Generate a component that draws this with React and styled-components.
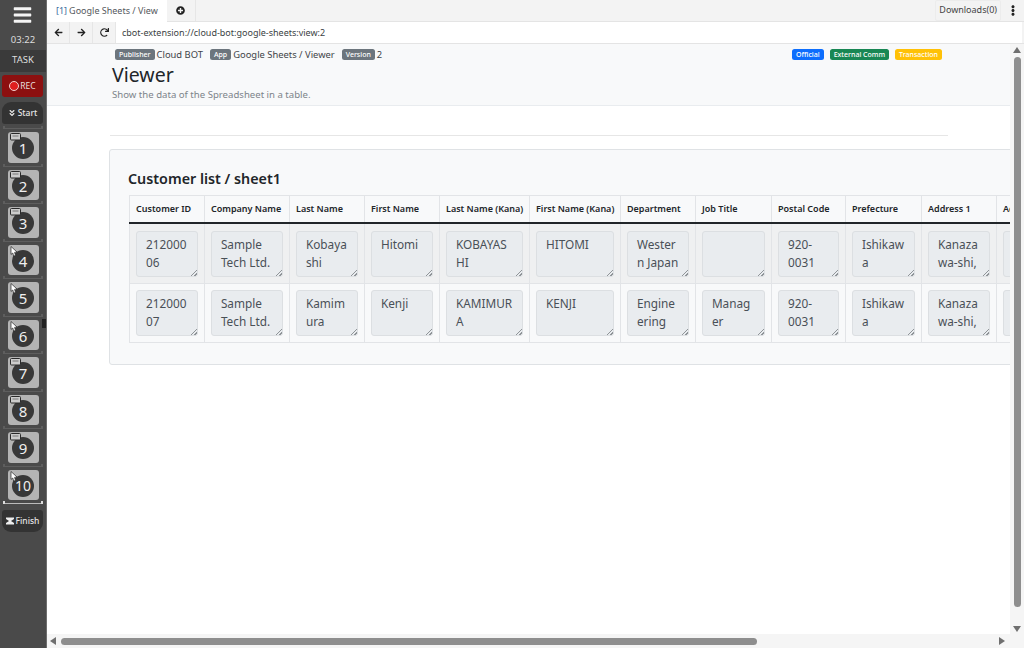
import React from 'react'
import styled, { createGlobalStyle } from 'styled-components'
import { FaArrowLeft, FaArrowRight, FaRedo, FaPlusCircle, FaEllipsisV, FaBars, FaAngleDoubleDown } from 'react-icons/fa'

const Global = createGlobalStyle`
  html, body { margin: 0; padding: 0; height: 100%; overflow: hidden; }
  body { font-family: "Noto Sans", "Liberation Sans", sans-serif; color: #212529; background: #fff; }
`

const Shell = styled.div`
  display: flex;
  width: 1024px;
  height: 648px;
  overflow: hidden;
`

const Sidebar = styled.aside`
  position: relative;
  flex: 0 0 47px;
  display: flex;
  flex-direction: column;
  align-items: center;
  background: #4a4a4a;
  border-right: 1px solid #6e6e6e;
  box-sizing: border-box;
  color: #e9e9e9;
`

const Menu = styled.div`
  height: 30px;
  display: flex;
  align-items: center;
  justify-content: center;
  margin-left: -1px;
  color: #f4f4f4;
  font-size: 20px;
  svg { width: 19px; height: 20px; }
`

const Clock = styled.div`
  height: 20px;
  line-height: 20px;
  font-size: 9.5px;
  color: #dcdcdc;
`

const TaskBand = styled.div`
  width: 100%;
  height: 22px;
  line-height: 20px;
  text-align: center;
  font-size: 9.5px;
  background: #3a3a3a;
  color: #dedede;
`

const RecButton = styled.div`
  width: 41px;
  height: 22px;
  margin-top: 3px;
  margin-left: -1px;
  padding-bottom: 1px;
  box-sizing: border-box;
  display: flex;
  align-items: center;
  justify-content: center;
  gap: 1px;
  border-radius: 3px;
  background: #8c1010;
  font-size: 8.5px;
  color: #e8dede;
`

const RecDot = styled.span`
  width: 8px;
  height: 8px;
  border-radius: 50%;
  background: #e01e1e;
  border: 1px solid #f2d0d0;
`

const EndButton = styled.div`
  width: 41px;
  height: 22px;
  margin-left: -1px;
  margin-top: ${p => p.$top}px;
  padding-bottom: 1px;
  box-sizing: border-box;
  display: flex;
  align-items: center;
  justify-content: center;
  gap: 2px;
  background: #333;
  border-radius: ${p => p.$radius};
  font-size: 8.5px;
  font-weight: 500;
  color: #e6e6e6;
  svg { width: 8px; height: 8px; }
`

const Steps = styled.div`
  display: flex;
  flex-direction: column;
  margin-top: 1px;
  margin-left: -1px;
`

const Connector = styled.div`
  position: relative;
  width: 40px;
  height: 7px;
  &::before {
    content: '';
    position: absolute;
    left: 0;
    right: 0;
    top: 3px;
    border-top: 1px solid ${p => (p.$light ? '#bbb' : '#5e5e5e')};
  }
  &::after {
    content: '';
    position: absolute;
    left: 0;
    right: 0;
    top: 1px;
    height: 3px;
    border-left: 2px solid ${p => (p.$light ? '#ddd' : '#5e5e5e')};
    border-right: 2px solid ${p => (p.$light ? '#ddd' : '#5e5e5e')};
  }
`

const Step = styled.div`
  position: relative;
  width: 31px;
  height: 30.5px;
  margin-left: 5px;
  display: flex;
  align-items: center;
  justify-content: center;
  background: #b4b4b4;
  border-radius: 3px;
`

const StepNumber = styled.div`
  width: 22px;
  height: 22px;
  margin-top: 2px;
  border-radius: 50%;
  background: #383838;
  color: #efefef;
  display: flex;
  align-items: center;
  justify-content: center;
  font-size: ${p => (p.$small ? 14 : 15)}px;
`

const StepBadge = styled.svg`
  position: absolute;
  left: 2px;
  top: 1px;
`

const Handle = styled.div`
  position: absolute;
  left: 42px;
  top: 319px;
  width: 4px;
  height: 9px;
  background: #222;
`

const Main = styled.main`
  flex: 1;
  min-width: 0;
  display: flex;
  flex-direction: column;
`

const TabBar = styled.div`
  height: 22px;
  display: flex;
  background: #f3f3f3;
  border-bottom: 1px solid #e4e4e4;
  box-sizing: border-box;
  font-size: 9px;
  color: #55595e;
`

const Tab = styled.div`
  height: 22px;
  padding: 0 9px 2px;
  box-sizing: border-box;
  display: flex;
  align-items: center;
  background: #fff;
  span { color: #3c6e9e; margin-right: 2px; }
`

const NewTab = styled.div`
  width: 28px;
  display: flex;
  align-items: center;
  justify-content: center;
  border-right: 1px solid #e6e6e6;
  color: #222;
  svg { width: 9px; height: 9px; }
`

const TabTools = styled.div`
  margin-left: auto;
  display: flex;
  align-items: center;
  color: #222;
`

const Downloads = styled.div`
  height: 19px;
  line-height: 17px;
  padding: 0 3px;
  border: 1px solid #ececec;
  border-radius: 2px;
  color: #444;
  font-size: 9px;
`

const Kebab = styled.div`
  width: 23px;
  display: flex;
  justify-content: center;
  svg { width: 10px; height: 11px; }
`

const AddressBar = styled.div`
  height: 22px;
  display: flex;
  background: #f3f3f3;
  border-bottom: 1px solid #e4e4e4;
  box-sizing: border-box;
`

const NavButton = styled.div`
  width: 22px;
  display: flex;
  align-items: center;
  justify-content: center;
  border-right: 1px solid #e6e6e6;
  color: #222;
  svg { width: 9px; height: 9px; }
`

const Url = styled.div`
  flex: 1;
  margin-right: 2px;
  padding-left: 6px;
  line-height: 21px;
  background: #fff;
  font-size: 9px;
  color: #3b3f44;
`

const Viewport = styled.div`
  flex: 1;
  min-height: 0;
  display: grid;
  grid-template-columns: 1fr 14px;
  grid-template-rows: 1fr 14px;
`

const Scroller = styled.div`
  overflow: hidden;
  min-width: 0;
  min-height: 0;
`

const PageHead = styled.header`
  height: 62px;
  box-sizing: border-box;
  padding: 4px 68px 0 65px;
  background: #f8f9fa;
  border-bottom: 1px solid #e9ecef;
`

const MetaRow = styled.div`
  display: flex;
  align-items: center;
  height: 12px;
  font-size: 9.4px;
  color: #3f4448;
  padding-left: 3px;
`

const MetaValue = styled.span`
  margin: 0 7px 0 2px;
`

const Pill = styled.span`
  display: inline-block;
  height: 11px;
  line-height: 11px;
  padding: 0 4px;
  border-radius: 2.5px;
  font-size: 7px;
  font-weight: 500;
  color: ${p => p.$text || '#fff'};
  background: ${p => p.$bg || '#6c757d'};
`

const Flags = styled.div`
  margin-left: auto;
  display: flex;
  gap: 6px;
`

const Title = styled.h1`
  margin: 3px 0 0;
  font-size: 19.5px;
  font-weight: 400;
  line-height: 24px;
  color: #212529;
`

const Lead = styled.p`
  margin: 0;
  padding-top: 1px;
  line-height: 14px;
  font-size: 9.6px;
  color: #7d848a;
`

const Body = styled.div`
  padding: 29px 0 0 63px;
`

const Rule = styled.hr`
  width: 838px;
  margin: 0 0 13px;
  border: 0;
  border-top: 1px solid #e6e6e6;
`

const Card = styled.section`
  width: 1300px;
  height: 216px;
  margin-left: -1px;
  box-sizing: border-box;
  padding: 18px 18px 0 19px;
  background: #f8f9fa;
  border: 1px solid #dfe2e5;
  border-radius: 3px;
`

const CardTitle = styled.h2`
  margin: 0 0 6px -1px;
  height: 21px;
  line-height: 21px;
  font-size: 14.3px;
  font-weight: 600;
  color: #212529;
`

const Table = styled.table`
  border-collapse: collapse;
  table-layout: fixed;
  background: #f8f9fa;
`

const Th = styled.th`
  height: 27px;
  padding: 0 0 1px 6px;
  box-sizing: border-box;
  text-align: left;
  font-size: 9px;
  font-weight: 600;
  color: #212529;
  white-space: nowrap;
  border: 1px solid #e2e4e7;
  border-bottom: 2px solid #212529;
`

const Td = styled.td`
  padding: ${p => (p.$striped ? '7.2px' : '6.2px')} 6px 6.2px;
  border: 1px solid #e2e4e7;
  background: ${p => (p.$striped ? '#eff0f1' : 'transparent')};
`

const Field = styled.textarea`
  display: block;
  width: 100%;
  height: 46px;
  box-sizing: border-box;
  margin: 0;
  padding: 4.4px 9.5px 4.4px 8.9px;
  border: 1px solid #dcdfe2;
  border-radius: 3px;
  outline: 0;
  background: #e9ecef;
  color: #495057;
  font: 400 11.8px/17.7px "Noto Sans", "Liberation Sans", sans-serif;
  overflow: hidden;
  resize: both;
  &::-webkit-resizer {
    background: linear-gradient(135deg, transparent 78%, #8f9498 78%, #8f9498 83%, transparent 83%, transparent 89%, #8f9498 89%, #8f9498 94%, transparent 94%);
  }
`

const VTrack = styled.div`
  background: #f5f5f5;
  display: flex;
  flex-direction: column;
  align-items: center;
`

const HTrack = styled.div`
  background: #f5f5f5;
  display: flex;
  align-items: center;
`

const Thumb = styled.div`
  background: #8e8e8e;
  border-radius: 4px;
  ${p => (p.$vertical ? 'width: 7px; height: 550px; margin-top: 4px;' : 'height: 7px; width: 696px; margin-left: 5px;')}
`

const Arrow = styled.svg`
  flex: none;
  fill: #6f6f6f;
  margin: ${p => p.$margin};
`

const Corner = styled.div`
  background: #f5f5f5;
`

const columns = [
  ['Customer ID', 75],
  ['Company Name', 85],
  ['Last Name', 75],
  ['First Name', 75],
  ['Last Name (Kana)', 90],
  ['First Name (Kana)', 91],
  ['Department', 75],
  ['Job Title', 76],
  ['Postal Code', 74],
  ['Prefecture', 76],
  ['Address 1', 75],
  ['Address 2', 75],
]

const rows = [
  ['21200006', 'Sample Tech Ltd.', 'Kobayashi', 'Hitomi', 'KOBAYASHI', 'HITOMI', 'Western Japan', '', '920-0031', 'Ishikawa', 'Kanazawa-shi,', ''],
  ['21200007', 'Sample Tech Ltd.', 'Kamimura', 'Kenji', 'KAMIMURA', 'KENJI', 'Engineering', 'Manager', '920-0031', 'Ishikawa', 'Kanazawa-shi,', ''],
]

const triggers = ['msg', 'msg', 'msg', 'cursor', 'cursor', 'cursor', 'msg', 'msg', 'msg', 'cursor']

function Trigger({ kind }) {
  if (kind === 'cursor') {
    return (
      <StepBadge width="8" height="11" viewBox="0 0 8 11">
        <path d="M1 0.5 L7 6 L4.6 6.4 L5.6 9.6 L3.6 10 L2.8 7 L1 8.4 Z" fill="#fff" stroke="#222" strokeWidth="0.7" />
      </StepBadge>
    )
  }
  return (
    <StepBadge width="11" height="8" viewBox="0 0 11 8">
      <rect x="0.5" y="0.5" width="10" height="6.5" rx="1" fill="#ccc" stroke="#2a2a2a" />
      <path d="M2.5 3h6" stroke="#777" strokeWidth="1" />
    </StepBadge>
  )
}

function TriangleUp() {
  return <Arrow width="8" height="6" viewBox="0 0 8 6" $margin="3px 0 0"><path d="M4 0 L8 6 H0 Z" /></Arrow>
}

function TriangleDown() {
  return <Arrow width="8" height="6" viewBox="0 0 8 6" $margin="auto 0 2px"><path d="M4 6 L8 0 H0 Z" /></Arrow>
}

export default function App() {
  return (
    <Shell>
      <Global />
      <Sidebar>
        <Menu><FaBars /></Menu>
        <Clock>03:22</Clock>
        <TaskBand>TASK</TaskBand>
        <RecButton><RecDot />REC</RecButton>
        <EndButton $top={5} $radius="9px 9px 3px 3px"><FaAngleDoubleDown />Start</EndButton>
        <Steps>
          <Connector />
          {triggers.map((kind, i) => (
            <React.Fragment key={i}>
              <Step>
                <Trigger kind={kind} />
                <StepNumber $small={i === 9}>{i + 1}</StepNumber>
              </Step>
              <Connector $light={i === 9} />
            </React.Fragment>
          ))}
        </Steps>
        <EndButton $top={3} $radius="3px 3px 9px 9px">
          <svg viewBox="0 0 8 8"><path d="M0 0.5h8v1.5L5 4l3 2v1.5H0V6l3-2-3-2z" fill="#eee" /></svg>
          Finish
        </EndButton>
        <Handle />
      </Sidebar>
      <Main>
        <TabBar>
          <Tab><span>[1]</span> Google Sheets / View</Tab>
          <NewTab><FaPlusCircle /></NewTab>
          <TabTools>
            <Downloads>Downloads(0)</Downloads>
            <Kebab><FaEllipsisV /></Kebab>
          </TabTools>
        </TabBar>
        <AddressBar>
          <NavButton><FaArrowLeft /></NavButton>
          <NavButton><FaArrowRight /></NavButton>
          <NavButton><FaRedo /></NavButton>
          <Url>cbot-extension://cloud-bot:google-sheets:view:2</Url>
        </AddressBar>
        <Viewport>
          <Scroller>
            <PageHead>
              <MetaRow>
                <Pill>Publisher</Pill><MetaValue>Cloud BOT</MetaValue>
                <Pill>App</Pill><MetaValue>Google Sheets / Viewer</MetaValue>
                <Pill>Version</Pill><MetaValue>2</MetaValue>
                <Flags>
                  <Pill $bg="#0d6efd">Official</Pill>
                  <Pill $bg="#198754">External Comm</Pill>
                  <Pill $bg="#ffc107">Transaction</Pill>
                </Flags>
              </MetaRow>
              <Title>Viewer</Title>
              <Lead>Show the data of the Spreadsheet in a table.</Lead>
            </PageHead>
            <Body>
              <Rule />
              <Card>
                <CardTitle>Customer list / sheet1</CardTitle>
                <Table style={{ width: columns.reduce((sum, c) => sum + c[1], 0) }}>
                  <colgroup>
                    {columns.map(([name, width]) => <col key={name} style={{ width }} />)}
                  </colgroup>
                  <thead>
                    <tr>{columns.map(([name]) => <Th key={name}>{name}</Th>)}</tr>
                  </thead>
                  <tbody>
                    {rows.map((row, r) => (
                      <tr key={r}>
                        {row.map((value, c) => (
                          <Td key={c} $striped={r === 0}>
                            <Field readOnly rows={2} defaultValue={value} />
                          </Td>
                        ))}
                      </tr>
                    ))}
                  </tbody>
                </Table>
              </Card>
            </Body>
          </Scroller>
          <VTrack>
            <TriangleUp />
            <Thumb $vertical />
            <TriangleDown />
          </VTrack>
          <HTrack>
            <Arrow width="6" height="8" viewBox="0 0 6 8" $margin="0 0 0 3px"><path d="M0 4 L6 0 V8 Z" /></Arrow>
            <Thumb />
            <Arrow width="6" height="8" viewBox="0 0 6 8" $margin="0 5px 0 auto"><path d="M6 4 L0 0 V8 Z" /></Arrow>
          </HTrack>
          <Corner />
        </Viewport>
      </Main>
    </Shell>
  )
}
